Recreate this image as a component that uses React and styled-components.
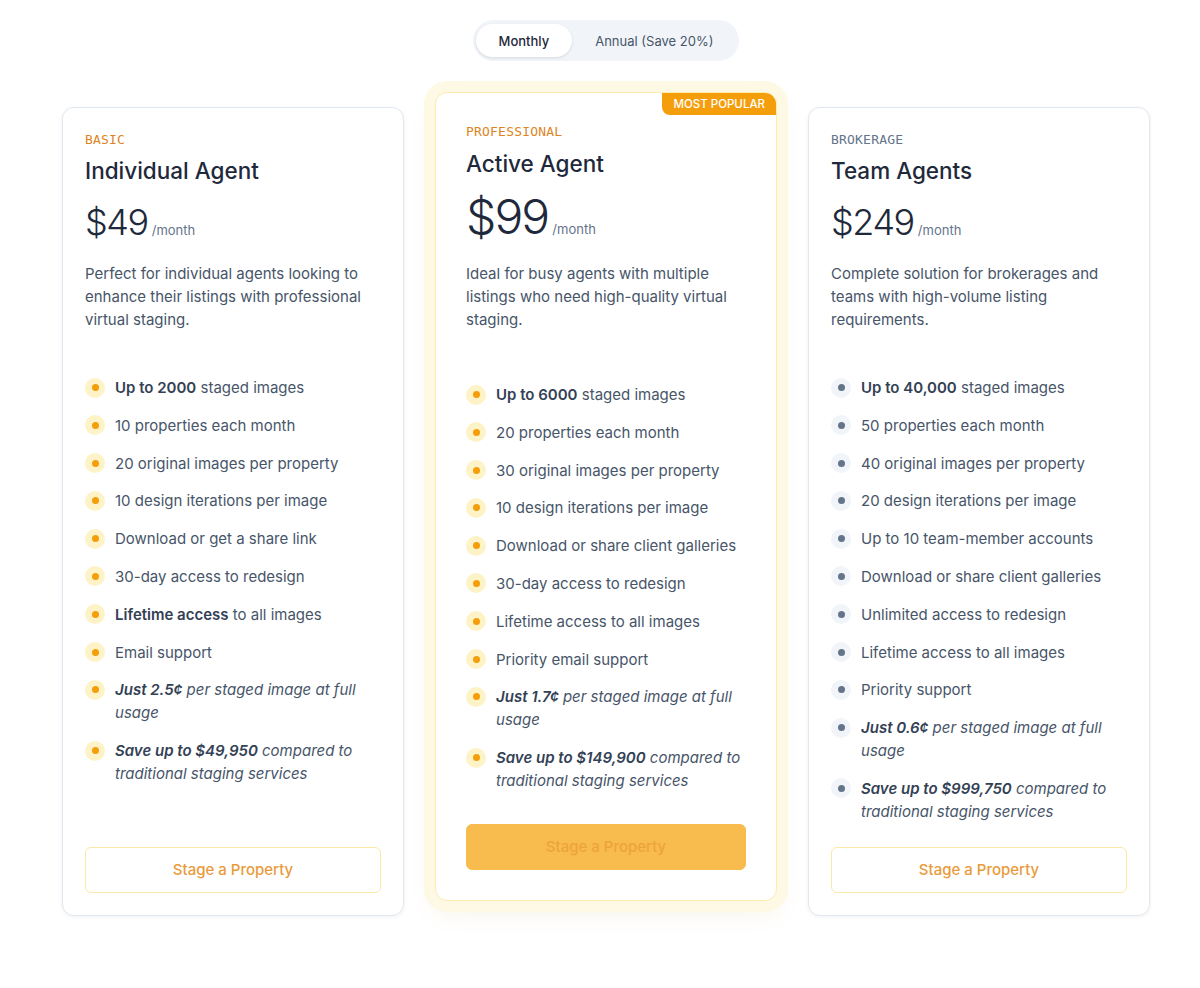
import React from 'react';
import styled, { createGlobalStyle } from 'styled-components';

const GlobalStyle = createGlobalStyle`
  body {
    margin: 0;
    background: #ffffff;
    font-family: Inter, "Noto Sans", sans-serif;
    -webkit-font-smoothing: antialiased;
  }
`;

const Page = styled.div`
  display: flex;
  flex-direction: column;
  align-items: center;
  padding: 20px 0 60px 12px;
`;

const Toggle = styled.div`
  display: flex;
  padding: 4px 3px;
  background: #f1f5f9;
  border-radius: 999px;
`;

const ToggleButton = styled.button`
  border: none;
  background: ${({ active }) => (active ? '#ffffff' : 'transparent')};
  box-shadow: ${({ active }) => (active ? '0 1px 3px rgba(15, 23, 42, 0.12)' : 'none')};
  color: ${({ active }) => (active ? '#1e293b' : '#475569')};
  font-family: Inter, sans-serif;
  font-size: 13px;
  font-weight: ${({ active }) => (active ? 500 : 400)};
  padding: 8px 23px;
  height: 33px;
  border-radius: 999px;
`;

const Grid = styled.div`
  display: grid;
  grid-template-columns: repeat(3, 342px);
  column-gap: 31px;
  margin-top: 46px;
`;

const Card = styled.div`
  position: relative;
  display: flex;
  flex-direction: column;
  background: #ffffff;
  border: 1px solid ${({ featured }) => (featured ? '#fcecae' : '#e2e8f0')};
  border-radius: 12px;
  padding: ${({ featured }) => (featured ? '29px 30px 30px' : '22px 22px 22px')};
  box-shadow: ${({ featured }) =>
    featured
      ? '0 0 0 11px #fef9e4, 0 10px 24px rgba(180, 140, 20, 0.12)'
      : '0 1px 4px rgba(15, 23, 42, 0.06)'};
  transform: ${({ featured }) => (featured ? 'translateY(-15px)' : 'none')};
`;

const Badge = styled.div`
  position: absolute;
  top: 0;
  right: 0;
  background: #f59e0b;
  color: #ffffff;
  font-size: 11.5px;
  line-height: 14px;
  font-weight: 500;
  padding: 4px 11px 4px 11px;
  border-radius: 0 11px 0 8px;
`;

const Tier = styled.div`
  font-family: "DejaVu Sans Mono", "Liberation Mono", monospace;
  font-size: 13px;
  line-height: 20px;
  letter-spacing: 0.2px;
  color: ${({ muted }) => (muted ? '#64748b' : '#dd8524')};
`;

const Title = styled.h3`
  margin: ${({ featured }) => (featured ? '8px' : '7px')} 0 0;
  font-size: 22.5px;
  line-height: 28px;
  font-weight: 500;
  color: #1e293b;
`;

const PriceRow = styled.div`
  display: flex;
  align-items: baseline;
  gap: 4px;
  margin-top: ${({ featured }) => (featured ? '15px' : '17px')};
`;

const Price = styled.span`
  font-size: ${({ featured }) => (featured ? '48px' : '36px')};
  line-height: ${({ featured }) => (featured ? '48px' : '40px')};
  font-weight: 300;
  letter-spacing: -0.04em;
  color: #1e293b;
`;

const Period = styled.span`
  font-size: 13px;
  color: #64748b;
`;

const Description = styled.p`
  margin: ${({ featured }) => (featured ? '21px' : '20px')} 0 0;
  font-size: 15px;
  line-height: 23px;
  color: #475569;
`;

const Features = styled.ul`
  list-style: none;
  margin: ${({ featured }) => (featured ? '52px' : '45px')} 0 0;
  padding: 0;
  display: flex;
  flex-direction: column;
  gap: 14.8px;
  flex: 1;
`;

const Feature = styled.li`
  display: flex;
  gap: 10px;
  font-size: 15px;
  line-height: 23px;
  color: #475569;
  font-style: ${({ italic }) => (italic ? 'italic' : 'normal')};

  strong {
    font-weight: 600;
    color: #334155;
  }
`;

const Dot = styled.span`
  flex-shrink: 0;
  width: 20px;
  height: 20px;
  margin-top: 1.5px;
  border-radius: 50%;
  background: ${({ muted }) => (muted ? '#f1f5f9' : '#fef3c7')};
  display: flex;
  align-items: center;
  justify-content: center;

  &::after {
    content: '';
    width: 7px;
    height: 7px;
    border-radius: 50%;
    background: ${({ muted }) => (muted ? '#64748b' : '#f59e0b')};
  }
`;

const ActionButton = styled.button`
  margin-top: ${({ featured }) => (featured ? '30px' : '24px')};
  height: 46px;
  border-radius: 6px;
  font-family: Inter, sans-serif;
  font-size: 15px;
  font-weight: 500;
  border: 1px solid ${({ featured }) => (featured ? '#f8bb4e' : '#fde9a6')};
  background: ${({ featured }) => (featured ? '#f8bb4e' : '#ffffff')};
  color: ${({ featured }) => (featured ? '#eda43b' : '#e99b3c')};
`;

const plans = [
  {
    tier: 'BASIC',
    title: 'Individual Agent',
    price: '$49',
    description:
      'Perfect for individual agents looking to enhance their listings with professional virtual staging.',
    features: [
      [<strong key="b">Up to 2000</strong>, ' staged images'],
      ['10 properties each month'],
      ['20 original images per property'],
      ['10 design iterations per image'],
      ['Download or get a share link'],
      ['30-day access to redesign'],
      [<strong key="b">Lifetime access</strong>, ' to all images'],
      ['Email support'],
      { italic: true, parts: [<strong key="b">Just 2.5¢</strong>, ' per staged image at full usage'] },
      { italic: true, parts: [<strong key="b">Save up to $49,950</strong>, ' compared to traditional staging services'] },
    ],
  },
  {
    tier: 'PROFESSIONAL',
    title: 'Active Agent',
    price: '$99',
    featured: true,
    description:
      'Ideal for busy agents with multiple listings who need high-quality virtual staging.',
    features: [
      [<strong key="b">Up to 6000</strong>, ' staged images'],
      ['20 properties each month'],
      ['30 original images per property'],
      ['10 design iterations per image'],
      ['Download or share client galleries'],
      ['30-day access to redesign'],
      ['Lifetime access to all images'],
      ['Priority email support'],
      { italic: true, parts: [<strong key="b">Just 1.7¢</strong>, ' per staged image at full usage'] },
      { italic: true, parts: [<strong key="b">Save up to $149,900</strong>, ' compared to traditional staging services'] },
    ],
  },
  {
    tier: 'BROKERAGE',
    title: 'Team Agents',
    price: '$249',
    muted: true,
    description:
      'Complete solution for brokerages and teams with high-volume listing requirements.',
    features: [
      [<strong key="b">Up to 40,000</strong>, ' staged images'],
      ['50 properties each month'],
      ['40 original images per property'],
      ['20 design iterations per image'],
      ['Up to 10 team-member accounts'],
      ['Download or share client galleries'],
      ['Unlimited access to redesign'],
      ['Lifetime access to all images'],
      ['Priority support'],
      { italic: true, parts: [<strong key="b">Just 0.6¢</strong>, ' per staged image at full usage'] },
      { italic: true, parts: [<strong key="b">Save up to $999,750</strong>, ' compared to traditional staging services'] },
    ],
  },
];

function PlanCard({ plan }) {
  const { tier, title, price, description, features, featured, muted } = plan;
  return (
    <Card featured={featured}>
      {featured && <Badge>MOST POPULAR</Badge>}
      <Tier muted={muted}>{tier}</Tier>
      <Title featured={featured}>{title}</Title>
      <PriceRow featured={featured}>
        <Price featured={featured}>{price}</Price>
        <Period>/month</Period>
      </PriceRow>
      <Description featured={featured}>{description}</Description>
      <Features featured={featured}>
        {features.map((f, i) => {
          const item = Array.isArray(f) ? { parts: f } : f;
          return (
            <Feature key={i} italic={item.italic}>
              <Dot muted={muted} />
              <span>{item.parts}</span>
            </Feature>
          );
        })}
      </Features>
      <ActionButton featured={featured}>Stage a Property</ActionButton>
    </Card>
  );
}

export default function App() {
  return (
    <Page>
      <GlobalStyle />
      <Toggle>
        <ToggleButton active>Monthly</ToggleButton>
        <ToggleButton>Annual (Save 20%)</ToggleButton>
      </Toggle>
      <Grid>
        {plans.map((plan) => (
          <PlanCard key={plan.tier} plan={plan} />
        ))}
      </Grid>
    </Page>
  );
}
